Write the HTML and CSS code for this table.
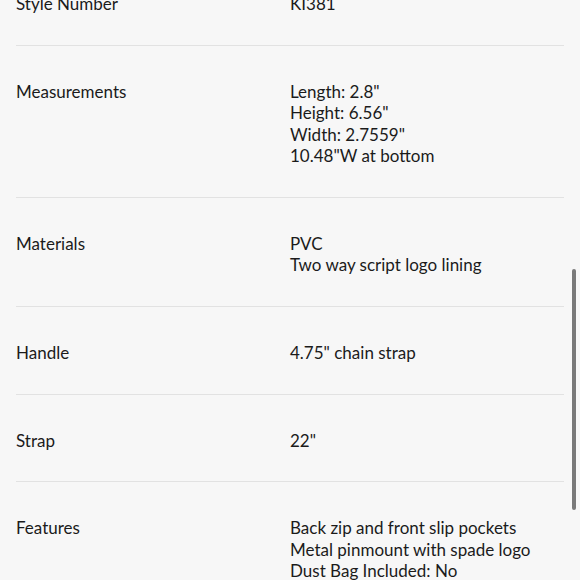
FILE: index.html
```html
<!DOCTYPE html>
<html>
<head>
<meta charset="utf-8">
<link rel="stylesheet" href="styles.css">
</head>
<body>
<div class="specs">
  <div class="row">
    <div class="label">Style Number</div>
    <div class="value">KI381</div>
  </div>
  <div class="row">
    <div class="label">Measurements</div>
    <div class="value">Length: 2.8"<br>Height: 6.56"<br>Width: 2.7559"<br>10.48"W at bottom</div>
  </div>
  <div class="row">
    <div class="label">Materials</div>
    <div class="value">PVC<br>Two way script logo lining</div>
  </div>
  <div class="row">
    <div class="label">Handle</div>
    <div class="value">4.75" chain strap</div>
  </div>
  <div class="row">
    <div class="label">Strap</div>
    <div class="value">22"</div>
  </div>
  <div class="row">
    <div class="label">Features</div>
    <div class="value">Back zip and front slip pockets<br>Metal pinmount with spade logo<br>Dust Bag Included: No</div>
  </div>
</div>
<div class="thumb"></div>
</body>
</html>
```

FILE: styles.css
```css
html, body {
  margin: 0;
  padding: 0;
  background: #f7f7f7;
  height: 580px;
  overflow: hidden;
}
body {
  font-family: "Lato", "Liberation Sans", sans-serif;
  font-size: 17px;
  line-height: 21.3px;
  color: #1b1b1b;
}
.specs {
  margin: -41.8px 16px 0 16px;
}
.row {
  display: grid;
  grid-template-columns: 274px 1fr;
  padding: 35px 0 30.5px 0;
  border-bottom: 1px solid #e2e2e2;
}
.thumb {
  position: absolute;
  top: 269px;
  right: 4px;
  width: 4px;
  height: 241px;
  border-radius: 2px;
  background: #7a7a7a;
}
```
